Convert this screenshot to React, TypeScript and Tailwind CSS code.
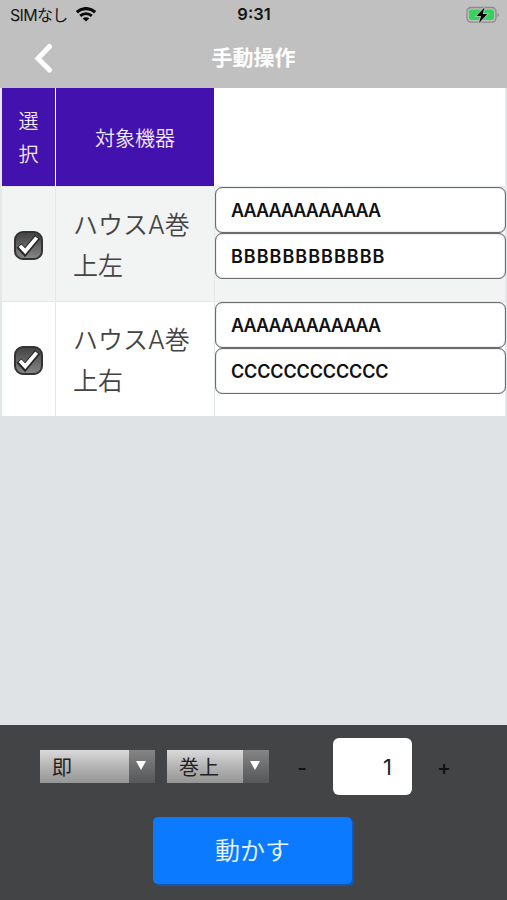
import { useState } from 'react';

const devices = [
  {
    id: 1,
    name: ['ハウスA巻', '上左'],
    fields: [
      { value: 'AAAAAAAAAAAA', tracking: 'tracking-[-0.9px]' },
      { value: 'BBBBBBBBBBBB', tracking: 'tracking-[1px]' },
    ],
  },
  {
    id: 2,
    name: ['ハウスA巻', '上右'],
    fields: [
      { value: 'AAAAAAAAAAAA', tracking: 'tracking-[-0.9px]' },
      { value: 'CCCCCCCCCCCC', tracking: 'tracking-[-0.15px]' },
    ],
  },
];

function WifiIcon() {
  return (
    <svg className="ml-[8px] h-[15px] w-[20px]" viewBox="0 0 20 15" fill="none" stroke="#0a0a0a">
      <path d="M.9 5.200C6 .400 14 .400 19.100 5.200" strokeWidth="3.300" />
      <path d="M4.200 8.900c3.300-3.100 8.300-3.100 11.600 0" strokeWidth="2.900" />
      <path d="M10 14.600l-3.300-3.200c1.900-1.600 4.700-1.600 6.600 0z" fill="#0a0a0a" stroke="none" />
    </svg>
  );
}

function BatteryIcon() {
  return (
    <svg className="h-[18px] w-[34px]" viewBox="0 0 34 18">
      <rect x="1" y="1.500" width="29" height="14.600" rx="4" fill="none" stroke="#8b8b8b" strokeWidth="1.300" />
      <path d="M31.500 7v4c1.800-.5 1.800-3.500 0-4z" fill="#8b8b8b" />
      <rect x="3" y="3.500" width="25" height="10.600" rx="2.200" fill="#35d35c" />
      <path
        d="M18.500 1.500L10.500 10h4.600l-2.100 7 8.300-9h-4.600z"
        fill="#000"
        stroke="#c0c0c0"
        strokeWidth="1.600"
        paintOrder="stroke"
      />
    </svg>
  );
}

function Checkbox({ checked, onChange }: { checked: boolean; onChange: () => void }) {
  return (
    <button
      onClick={onChange}
      className="h-[29px] w-[29px] rounded-[9px] border-2 border-[#333] bg-linear-to-b from-[#444] to-[#858585]"
    >
      {checked && (
        <svg className="h-[25px] w-[25px]" viewBox="0 0 25 25" fill="none">
          <path d="M3 12.500l6 6.700L21.500 4" stroke="#262626" strokeWidth="6.500" />
          <path d="M4 12.700l5.200 5.600L20.700 4.600" stroke="#fff" strokeWidth="3.800" />
        </svg>
      )}
    </button>
  );
}

function Select({ label, className }: { label: string; className: string }) {
  return (
    <button className={`flex h-[33px] ${className}`}>
      <span className="flex h-full flex-1 items-center bg-linear-to-b from-[#dadada] via-[#b4b4b4] to-[#969696] pt-[2px] pl-[12px] text-[20px] leading-none text-[#222]">
        {label}
      </span>
      <span className="flex h-full w-[26px] justify-center bg-linear-to-b from-[#858585] to-[#555759] pt-[11px]">
        <svg className="mr-[2px] h-[9px] w-[10px]" viewBox="0 0 10 9">
          <path d="M0 0h10L5 9z" fill="#fff" />
        </svg>
      </span>
    </button>
  );
}

export default function App() {
  const [selected, setSelected] = useState([1, 2]);
  const [count, setCount] = useState(1);

  const toggle = (id: number) => {
    setSelected(selected.includes(id) ? selected.filter((s) => s !== id) : [...selected, id]);
  };

  return (
    <div className="flex h-[900px] w-[507px] flex-col overflow-hidden bg-[#dfe3e6] font-['Inter','Noto_Sans_CJK_JP',sans-serif]">
      {/* Status bar and title */}
      <header className="h-[88px] shrink-0 bg-[#c0c0c0]">
        <div className="grid h-[29px] grid-cols-[1fr_auto_1fr] items-center pr-[7px] pl-[10px] text-[#151515]">
          <div className="flex items-center text-[16px] leading-none tracking-[-0.7px]">
            SIMなし
            <WifiIcon />
          </div>
          <span className="mr-[2px] text-[16.5px] leading-none font-semibold">9:31</span>
          <div className="flex justify-end">
            <BatteryIcon />
          </div>
        </div>
        <div className="grid h-[57px] grid-cols-[1fr_auto_1fr] items-center">
          <button className="pl-[34px]">
            <svg className="h-[30px] w-[19px]" viewBox="0 0 19 30" fill="none" stroke="#fff" strokeWidth="5">
              <path d="M15.500 3.500L4 15.500l11.500 11.500" strokeLinecap="round" />
            </svg>
          </button>
          <h1 className="text-[21px] leading-none font-bold text-white">手動操作</h1>
        </div>
      </header>

      {/* Device table */}
      <main className="flex-1">
        <div className="border-x-2 border-[#e3e8e9] bg-white">
          <div className="grid h-[98px] grid-cols-[53px_158px_1fr] gap-px text-[20px] font-[350] text-[#f1eafa]">
            <div className="flex items-center justify-center bg-[#4311ad] px-[16px] pt-[3px] text-center leading-[33px]">
              選<br />択
            </div>
            <div className="flex items-center justify-center bg-[#4311ad] pt-[3px]">対象機器</div>
          </div>
          {devices.map((device) => (
            <div
              key={device.id}
              className="grid h-[115px] grid-cols-[54px_159px_1fr] border-t border-[#e3e8e9] odd:bg-white even:bg-[#f2f3f3]"
            >
              <div className="flex items-center justify-center border-r border-[#e3e8e9] pt-[2px]">
                <Checkbox checked={selected.includes(device.id)} onChange={() => toggle(device.id)} />
              </div>
              <div className="border-r border-[#e3e8e9] pt-[18px] pl-[17px] text-[25px] leading-[41px] font-[350] text-[#444]">
                {device.name.map((line) => (
                  <div key={line} className="whitespace-nowrap">
                    {line}
                  </div>
                ))}
              </div>
              <div className="-mr-px">
                {device.fields.map((field, i) => (
                  <input
                    key={i}
                    defaultValue={field.value}
                    className={`block h-[46px] w-full rounded-[7px] border border-[#6c6c6c] bg-white px-[15px] text-[18px] font-semibold text-[#111] shadow-[inset_0_0_1px_#555] ${field.tracking}`}
                  />
                ))}
              </div>
            </div>
          ))}
        </div>
      </main>

      {/* Operation panel */}
      <footer className="h-[175px] shrink-0 bg-[#434446]">
        <div className="flex h-[83px] items-center pl-[40px]">
          <Select label="即" className="w-[115px]" />
          <Select label="巻上" className="ml-[12px] w-[102px]" />
          <button
            onClick={() => setCount(count - 1)}
            className="ml-[23px] w-[20px] pt-[2px] text-[21px] font-medium text-[#111]"
          >
            -
          </button>
          <div className="ml-[21px] flex h-[57px] w-[79px] items-center justify-end rounded-[6px] bg-white pt-[2px] pr-[20px] text-[22px] text-[#222]">
            {count}
          </div>
          <button
            onClick={() => setCount(count + 1)}
            className="ml-[22px] w-[20px] pt-[2px] text-[21px] font-medium text-[#111]"
          >
            +
          </button>
        </div>
        <div className="pt-[9px] pl-[153px]">
          <button className="h-[67px] w-[199px] rounded-[5px] bg-[#0b7aff] pt-[3px] text-[25px] font-[350] text-[#e8f6ff] shadow-[2px_2px_1px_#1458b4]">
            動かす
          </button>
        </div>
      </footer>
    </div>
  );
}
